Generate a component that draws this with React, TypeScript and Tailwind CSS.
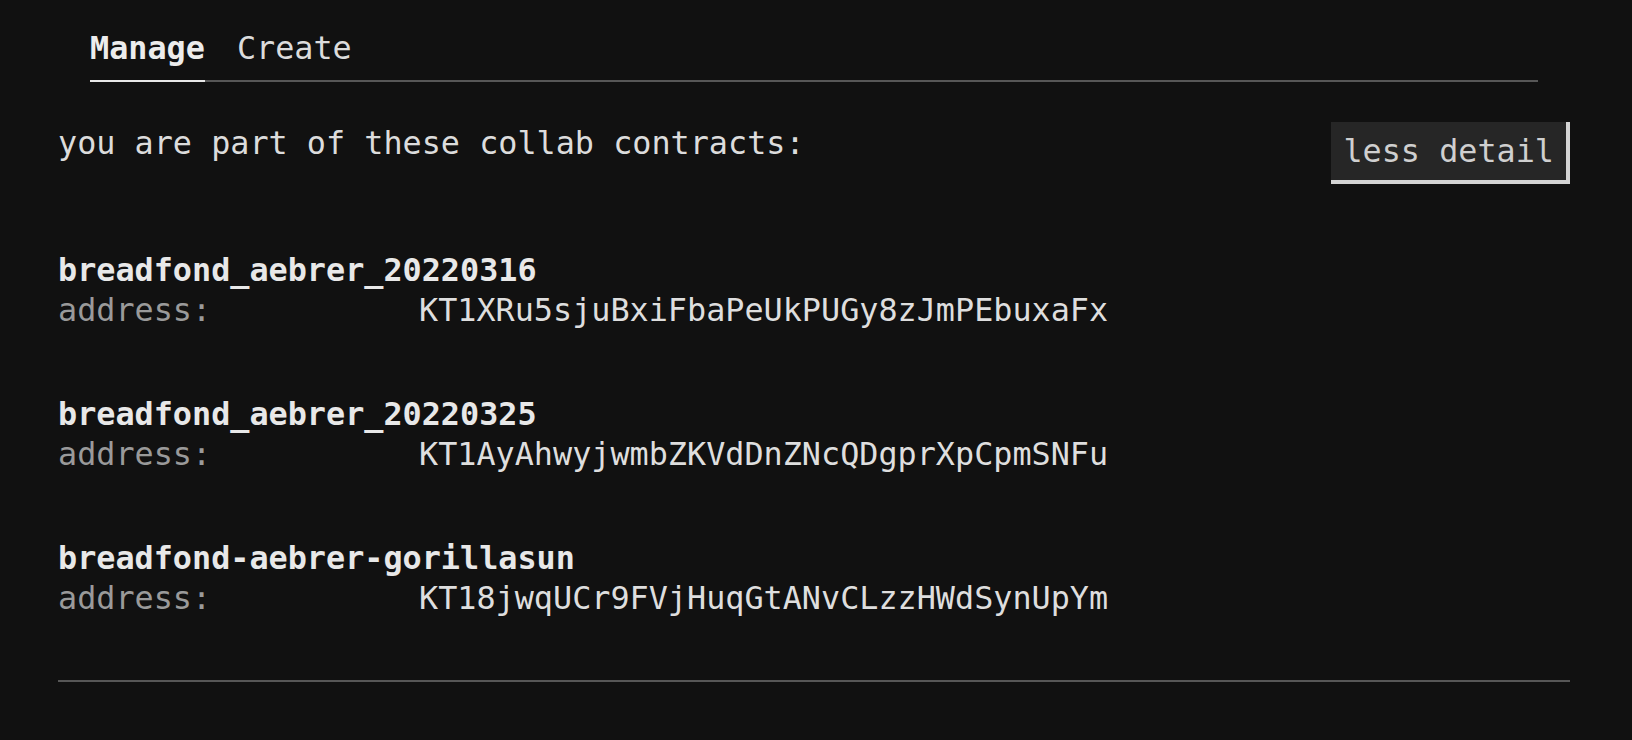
import { useState } from "react";

interface Contract {
  name: string;
  address: string;
}

const contracts: Contract[] = [
  { name: "breadfond_aebrer_20220316", address: "KT1XRu5sjuBxiFbaPeUkPUGy8zJmPEbuxaFx" },
  { name: "breadfond_aebrer_20220325", address: "KT1AyAhwyjwmbZKVdDnZNcQDgprXpCpmSNFu" },
  { name: "breadfond-aebrer-gorillasun", address: "KT18jwqUCr9FVjHuqGtANvCLzzHWdSynUpYm" },
];

const tabs = ["Manage", "Create"];

const ContractItem = ({ name, address }: Contract) => {
  return (
    <div className="flex flex-col">
      <div className="font-bold text-[#e8e8e8]">{name}</div>
      <div className="flex">
        <span className="w-[361px] shrink-0 text-[#9a9a9a]">address:</span>
        <span className="text-[#dedede]">{address}</span>
      </div>
    </div>
  );
};

export default function App() {
  const [active, setActive] = useState("Manage");
  const [detail, setDetail] = useState(true);

  return (
    <div
      className="min-h-[740px] bg-[#111111] pl-[58px] pr-[62px] pt-[28px] text-[31.8px] leading-[40px] text-[#e0e0e0]"
      style={{ fontFamily: '"DejaVu Sans Mono", "Liberation Mono", monospace' }}
    >
      <div className="mx-8 flex gap-8 border-b-2 border-[#575757]">
        {tabs.map((t) => (
          <button
            key={t}
            onClick={() => setActive(t)}
            className={
              active === t
                ? "-mb-[2px] border-b-2 border-[#e8e8e8] pb-3 font-bold text-[#ececec]"
                : "-mb-[2px] border-b-2 border-transparent pb-3 text-[#dcdcdc]"
            }
          >
            {t}
          </button>
        ))}
      </div>

      <div className="mt-10 flex items-start justify-between">
        <p className="pt-[1px] text-[#dcdcdc]">you are part of these collab contracts:</p>
        <button
          onClick={() => setDetail(!detail)}
          className="border-b-4 border-r-4 border-[#d4d4d4] bg-[#262626] px-3 py-[9px] text-[#cfcfcf]"
        >
          {detail ? "less detail" : "more detail"}
        </button>
      </div>

      <div className="mt-[66px] flex flex-col gap-16">
        {contracts.map((c) => (
          <ContractItem key={c.address} name={c.name} address={c.address} />
        ))}
      </div>

      <hr className="mt-[62px] border-t-2 border-[#575757]" />
    </div>
  );
}
